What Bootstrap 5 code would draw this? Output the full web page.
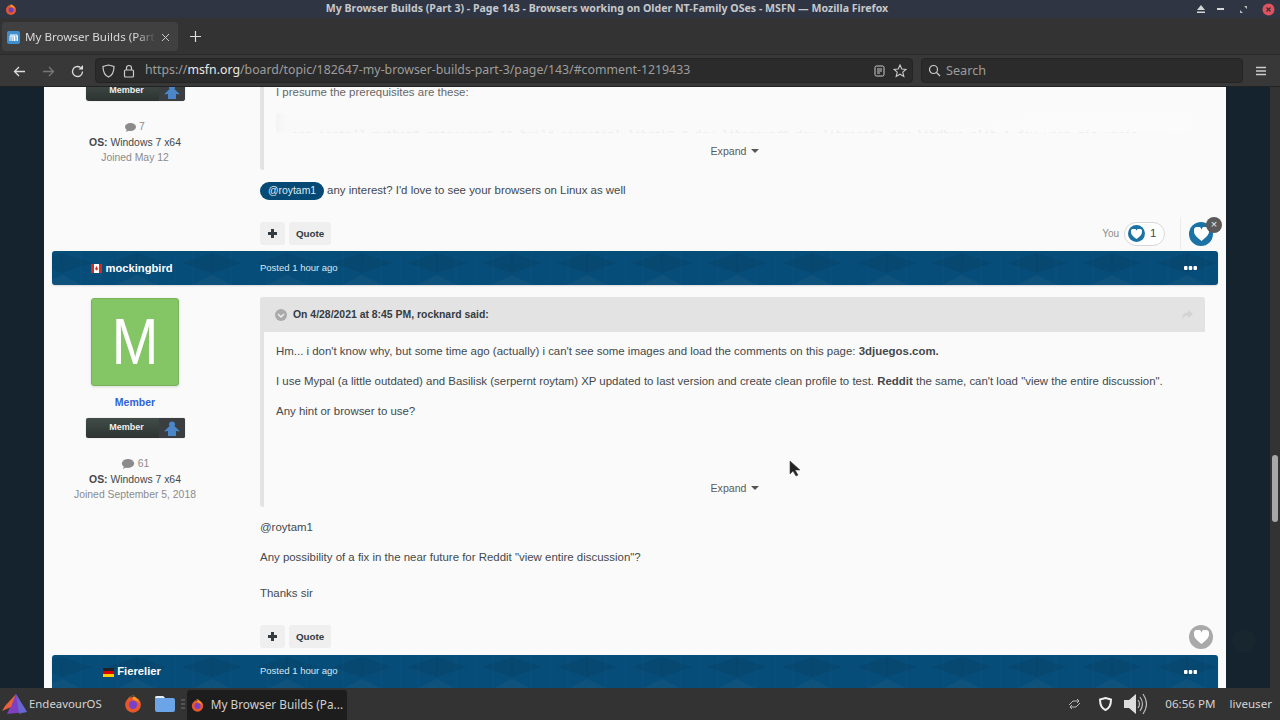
<!DOCTYPE html>
<html lang="en"><head><meta charset="utf-8"><title>My Browser Builds</title>
<link href="https://cdn.jsdelivr.net/npm/bootstrap@5.3.0/dist/css/bootstrap.min.css" rel="stylesheet">
<style>
html,body{height:720px;overflow:hidden;margin:0;background:#333}
body{font-family:"Liberation Sans",Arial,sans-serif;font-size:11.44px;color:#43484c;position:relative}
.uifont{font-family:"Noto Sans",sans-serif}
.titlebar{height:18px;background:#2f3542;color:#c5c8cc;font-size:10.6px;font-weight:700;padding:0 5px}
.titlebar .sidel{width:94px}
.titlebar .sider{width:160px;gap:14px}
.titlebar .sider svg:first-child{margin-right:-3px}
.tabbar{height:36px;background:#333;padding:4px 2px 3px}
.ftab{width:176px;height:29px;background:#404040;border-radius:4px;color:#d8d8d8;font-size:11.6px;padding:1px 8px 0 5px;overflow:hidden;white-space:nowrap}
.ftab .ttl{width:131px;margin-left:5px;overflow:hidden;-webkit-mask-image:linear-gradient(90deg,#000 85%,transparent)}
.newtab{margin-left:12px;width:16px}
.toolbar{height:33px;background:#383838;border-top:1px solid #2a2a2a;border-bottom:1px solid #222;padding:0 13px;color:#ccc}
.navic{width:29px}
.navic.lastnav{width:24px}
.urlbox,.searchbox{height:25px;background:#2b2b2b;border:1px solid #242424;border-radius:4px;color:#9d9d9d}
.urlbox{width:818px;padding:0 5px 0 6px;font-size:12.32px}
.urlbox .addr{margin-left:10px}
.searchbox{width:322px;margin-left:8px;padding:0 6px;font-size:12.7px}
.searchbox span{margin-left:5px}
.urlbox b{color:#e8e8e8;font-weight:400}
.viewport{height:601px;background:#14232d;overflow:hidden;padding-left:44px;position:relative}
.sheet{width:1182px;height:601px;background:#fafafa;padding:0 8px;flex:none}
.scrolltrack{width:10px;background:#333;margin-left:44px;height:601px;position:relative;flex:none}
.scrollthumb{width:6px;height:67px;background:#a8a8a8;border-radius:3px;margin:368px auto 0 2px}
.postone{height:164px}
.posttwo{height:370px}
.authcol{width:166px;flex:none;text-align:center;font-size:10.4px;color:#43484c}
.maincol{width:945px;margin-left:42px;flex:none}
.rankimg{width:99px;height:20px;margin:0 auto;border-radius:2px;background:linear-gradient(#414c48,#2d3431);color:#eee;font-weight:700;font-size:9px;overflow:hidden;box-shadow:0 0 1px #0006}
.rankimg.cut{margin-top:-6px;border-radius:3px}
.rankimg .lbl{width:73px;text-align:center;padding-left:9px}
.rankimg .ico{width:26px;background:#3a3e40;height:100%}
.postcount{color:#8b8b8b;line-height:15px;margin-top:18px}
.osline{line-height:15px;margin-top:1px}
.joined{color:#8b8b8b;line-height:15px}
.quotefirst{height:83px;border-left:4px solid #e3e3e3;padding-left:12px;border-radius:0 0 0 3px;color:#666}
.quotefirst .firstline{line-height:11px}
.fadecode{height:20px;margin:15px 14px 0 0;background:linear-gradient(90deg,#f4f4f4,#f9f9f9 1%,#fbfbfb);border-radius:3px;overflow:hidden;color:#ececec;font-family:"Liberation Mono",monospace;font-size:11.2px;padding:14px 0 0 16px;white-space:nowrap}
.expandlnk{font-size:10.6px;color:#5a5a5a;text-align:center;line-height:15px;margin-left:-11px}
.quotefirst .expandlnk{margin-top:11px}
.qbody .expandlnk{margin-top:62px}
.caretdn{display:inline-block;border:4px solid transparent;border-top-color:#555;border-bottom:0;margin-left:5px;vertical-align:2px}
.mention{background:#054a75;color:#dfe9f0;border-radius:12px;padding:0 8px;height:18px;line-height:18px;display:inline-block;margin-right:3px;font-size:10.4px}
.mentionrow{margin-top:12px;height:18px}
.mini{height:23px;background:#efefef;border-radius:3px;font-size:9.8px;font-weight:700;color:#353c41;padding:0 7px;margin-right:4px;line-height:23px;display:inline-block}
.mini.plus{width:25px;padding:0;display:inline-flex;align-items:center;justify-content:center}
.postbar{height:33px;margin-top:17px}
.postbar.second{margin-top:19px}
.yoult{color:#8b8b8b;font-size:10px;margin-right:5px}
.likepill{width:41px;height:24px;border:1px solid #d8d8d8;border-radius:12px;padding-left:3px;background:#fff}
.likenum{margin-left:5px}
.reactdot{width:24px;height:24px;border-radius:50%;background:#1a72a5;position:relative;margin-right:-8px}
.reactdot.off{background:#a9a9a9}
.smalldot{width:17px;height:17px;border-radius:50%;background:#1a72a5;flex:none}
.closedot{position:absolute;right:-9px;top:-5px;width:16px;height:16px;border-radius:50%;background:#5a5a5a;color:#eee;font-size:11px;line-height:15px;text-align:center}
.vsep{width:1px;height:33px;background:#ececec;margin:0 8px 0 15px}
.phead{height:34px;background:#074d79;border-radius:3px;color:#fff;position:relative;overflow:hidden;box-shadow:0 1px 2px #0002}
.phead.endcut{height:33px;border-radius:3px 3px 0 0}
.phead svg.pat{position:absolute;left:0;top:0}
.phead>div{position:relative}
.pname{width:166px;text-align:center;font-weight:700;font-size:11.2px;padding-right:6px}
.pdate{margin-left:42px;font-size:9.5px;color:#dbe6ed}
.dots{margin-left:auto;margin-right:21px}
.qhead{height:35px;background:#e3e3e3;border-radius:3px 3px 0 0;padding:0 12px 0 15px;font-size:10.43px;font-weight:700;color:#353c41}
.qhead .qtitle{margin-left:6px}
.qbody{height:175px;border-left:4px solid #e3e3e3;padding:12px 0 0 12px;border-radius:0 0 0 3px}
.qbody p{margin:0 0 15px;line-height:15px}
.bodyp{line-height:15px;margin:15px 0 0}
.bodyp.firstafter{margin-top:13px}
.bodyp.thanks{margin-top:21px}
.avatar{width:88px;height:88px;background:#84c566;border:1px solid #77b35b;border-radius:3px;color:#fff;font-size:65px;line-height:86px;margin:13px auto 0 39px;box-shadow:0 1px 3px #0002}
.avatar span{display:inline-block;transform:scaleX(.86)}
.grouplbl{color:#2f62d6;font-weight:700;font-size:10.5px;line-height:15px;margin:9px 0 8px}
.taskbar{height:32px;background:#333;color:#d4d4d4;font-size:11.6px;padding:0 8px 0 2px}
.taskbar .endos{margin-left:2px;font-size:11.4px}
.activetask{width:160px;height:30px;margin-top:2px;background:#1d1d1d;border-radius:3px 3px 0 0;padding-left:4px;margin-left:2px;color:#d0d0d0;white-space:nowrap}
.activetask span{margin-left:7px;font-size:11.8px}
.cursorptr{position:absolute;left:789px;top:373px}
.topghost{position:absolute;left:1232px;top:542px;width:24px;height:24px;border-radius:50%;background:#17262f}
.fficon{margin-left:22px}.foldericon{margin-left:13px}.gripicon{margin-left:6px}
.trayshield{margin-left:18px}.trayspk{margin-left:12px}.traytime{margin-left:18px}.trayuser{margin-left:14px}
</style></head><body>

<div class="titlebar d-flex align-items-center uifont">
 <div class="sidel d-flex"><svg width="12" height="13" viewBox="0 0 24 24"><circle cx="12" cy="13" r="10" fill="#e8572c"/><path d="M5 6Q9 0 13 2 8 5 13 7 19 8 22 13 18 4 12 1 7 1 5 6Z" fill="#fa9a2c"/><circle cx="12" cy="13" r="5" fill="#6b3fc4"/></svg></div>
 <div class="flex-grow-1 text-center">My Browser Builds (Part 3) - Page 143 - Browsers working on Older NT-Family OSes - MSFN — Mozilla Firefox</div>
 <div class="sider d-flex justify-content-end align-items-center">
  <svg width="10" height="8" viewBox="0 0 10 8"><path d="M5 0 9 5H1Z M1 6.500H9V8H1Z" fill="#d5d5d5"/></svg>
  <svg width="8" height="8" viewBox="0 0 8 8"><rect y="3" width="7" height="2" fill="#d5d5d5"/></svg>
  <svg width="9" height="9" viewBox="0 0 9 9"><path d="M5 1H8V4ZM4 8H1V5Z" fill="#bbb"/></svg>
  <svg width="13" height="13" viewBox="0 0 13 13"><circle cx="6.500" cy="6.500" r="6" fill="#e0525f"/><path d="M4.500 4.500l4 4m0-4l-4 4" stroke="#333" stroke-width="1.300"/></svg>
 </div>
</div>

<div class="tabbar d-flex align-items-center uifont">
 <div class="ftab d-flex align-items-center">
  <svg class="flex-none" width="13" height="13" viewBox="0 0 13 13"><rect width="13" height="13" rx="2" fill="#3f8fd0"/><path d="M3 10V5h2v5M6 10V5h1.500v5M9 10V5h1.500v5M3 4h7.500" stroke="#fff" stroke-width="1" fill="none"/></svg>
  <span class="ttl">My Browser Builds (Part 3) - Page</span>
  <svg class="ms-auto" width="9" height="9" viewBox="0 0 9 9"><path d="M1 1l7 7m0-7L1 8" stroke="#ccc" stroke-width="1"/></svg>
 </div>
 <div class="newtab d-flex"><svg width="11" height="11" viewBox="0 0 11 11"><path d="M5.500 0v11M0 5.500h11" stroke="#ddd" stroke-width="1.200"/></svg></div>
</div>

<div class="toolbar d-flex align-items-center uifont">
 <div class="navic"><svg width="13" height="13" viewBox="0 0 13 13"><path d="M12 6.500H1.500M6 2 1.500 6.500 6 11" stroke="#ddd" stroke-width="1.300" fill="none"/></svg></div>
 <div class="navic"><svg width="13" height="13" viewBox="0 0 13 13"><path d="M1 6.500h10.500M7 2l4.500 4.500L7 11" stroke="#777" stroke-width="1.300" fill="none"/></svg></div>
 <div class="navic lastnav"><svg width="13" height="13" viewBox="0 0 13 13"><path d="M11.500 6.500A5 5 0 1 1 9.500 2.500" stroke="#ddd" stroke-width="1.300" fill="none"/><path d="M12 0v4.500H7.500Z" fill="#ddd"/></svg></div>
 <div class="urlbox d-flex align-items-center">
  <svg width="13" height="14" viewBox="0 0 13 14"><path d="M6.500 1 12 2.500C12 8 10 11.500 6.500 13 3 11.500 1 8 1 2.500Z" stroke="#ccc" stroke-width="1.200" fill="none"/></svg>
  <svg class="ms-2" width="12" height="14" viewBox="0 0 12 14"><rect x="1.500" y="6" width="9" height="7" rx="1" stroke="#ccc" stroke-width="1.200" fill="none"/><path d="M3.500 6V4a2.500 2.500 0 0 1 5 0v2" stroke="#ccc" stroke-width="1.200" fill="none"/></svg>
  <span class="addr">https://<b>msfn.org</b>/board/topic/182647-my-browser-builds-part-3/page/143/#comment-1219433</span>
  <svg class="ms-auto" width="11" height="12" viewBox="0 0 11 12"><rect x="1" y="1" width="9" height="10" rx="1.500" stroke="#ccc" fill="none"/><path d="M3 4h5M3 6h5M3 8h3" stroke="#ccc"/></svg>
  <svg class="ms-2" width="14" height="14" viewBox="0 0 14 14"><path d="M7 1l1.800 4 4.200.400-3.200 2.800 1 4.200L7 10.200 3.200 12.400l1-4.200L1 5.400l4.200-.400Z" stroke="#ccc" stroke-width="1.100" fill="none"/></svg>
 </div>
 <div class="searchbox d-flex align-items-center">
  <svg width="13" height="13" viewBox="0 0 13 13"><circle cx="5.500" cy="5.500" r="4" stroke="#ccc" stroke-width="1.200" fill="none"/><path d="M8.500 8.500 12 12" stroke="#ccc" stroke-width="1.300"/></svg>
  <span>Search</span>
 </div>
 <svg class="ms-auto" width="12" height="10" viewBox="0 0 12 10"><path d="M1 1.500h10M1 5h10M1 8.500h10" stroke="#ccc" stroke-width="1.300"/></svg>
</div>

<div class="viewport d-flex">
 <div class="sheet">
  <div class="postone d-flex">
   <div class="authcol">
    <div class="rankimg cut d-flex align-items-center"><div class="lbl">Member</div><div class="ico d-flex align-items-center justify-content-center"><svg width="16" height="15" viewBox="0 0 16 15"><circle cx="8" cy="3.500" r="3" fill="#4b86c8"/><path d="M5 5.500h6L16 10.500 12 10v5H4v-5l-4 .5Z" fill="#4b86c8"/></svg></div></div>
    <div class="postcount"><svg width="11" height="9" viewBox="0 0 11 9"><ellipse cx="5.500" cy="4" rx="5.500" ry="4" fill="#8b8b8b"/><path d="M2 6 1 9 5 7Z" fill="#8b8b8b"/></svg> 7</div>
    <div class="osline"><b>OS:</b> Windows 7 x64</div>
    <div class="joined">Joined May 12</div>
   </div>
   <div class="maincol">
    <div class="quotefirst">
     <div class="firstline">I presume the prerequisites are these:</div>
     <div class="fadecode">apt install python2 gstreamer0.10 build-essential libgtk2.0-dev libasound2-dev libgconf2-dev libdbus-glib-1-dev yasm zip unzip</div>
     <div class="expandlnk">Expand<span class="caretdn"></span></div>
    </div>
    <div class="mentionrow d-flex align-items-center"><span class="mention">@roytam1</span><span>any interest? I'd love to see your browsers on Linux as well</span></div>
    <div class="postbar d-flex align-items-center">
     <span class="mini plus"><svg width="11" height="11" viewBox="0 0 11 11"><path d="M5.500 1v9M1 5.500h9" stroke="#353c41" stroke-width="3"/></svg></span><span class="mini">Quote</span>
     <span class="ms-auto yoult">You</span>
     <div class="likepill d-flex align-items-center"><span class="smalldot d-flex align-items-center justify-content-center"><svg width="11" height="10" viewBox="0 0 12 11"><path d="M6 11C2 8 0 6 0 3.500A3 3 0 0 1 6 2a3 3 0 0 1 6 1.500C12 6 10 8 6 11Z" fill="#fff"/></svg></span><span class="likenum">1</span></div>
     <div class="vsep"></div>
     <div class="reactdot d-flex align-items-center justify-content-center"><svg width="15" height="14" viewBox="0 0 12 11"><path d="M6 11C2 8 0 6 0 3.500A3 3 0 0 1 6 2a3 3 0 0 1 6 1.500C12 6 10 8 6 11Z" fill="#fff"/></svg><span class="closedot">×</span></div>
    </div>
   </div>
  </div>

  <div class="phead d-flex align-items-center">
   <svg class="pat" width="1166" height="34"><defs><pattern id="tri" width="75" height="34" patternUnits="userSpaceOnUse" patternTransform="translate(-27 0)"><path d="M7 12 37 2 67 12 37 22Z" fill="#00000012"/><path d="M37 2V22" stroke="#0000000c"/><path d="M17 34 37 24 57 34Z" fill="#ffffff08"/><path d="M0 0V34M18 0V34M56 0V34" stroke="#ffffff05"/></pattern></defs><rect width="1166" height="34" fill="url(#tri)"/></svg>
   <div class="pname"><svg width="11" height="9" viewBox="0 0 11 9"><rect width="11" height="9" fill="#fff"/><path d="M0 0h3v9H0ZM8 0h3v9H8Z" fill="#d52b1e"/><path d="M5.500 2 7 5 5.500 6.500 4 5Z" fill="#d52b1e"/></svg> mockingbird</div>
   <div class="pdate">Posted 1 hour ago</div>
   <div class="dots"><svg width="13" height="4" viewBox="0 0 13 4"><rect width="3.500" height="4" rx="1" fill="#fff"/><rect x="4.750" width="3.500" height="4" rx="1" fill="#fff"/><rect x="9.500" width="3.500" height="4" rx="1" fill="#fff"/></svg></div>
  </div>

  <div class="posttwo d-flex">
   <div class="authcol">
    <div class="avatar"><span>M</span></div>
    <div class="grouplbl">Member</div>
    <div class="rankimg d-flex align-items-center"><div class="lbl">Member</div><div class="ico d-flex align-items-center justify-content-center"><svg width="16" height="15" viewBox="0 0 16 15"><circle cx="8" cy="3.500" r="3" fill="#4b86c8"/><path d="M5 5.500h6L16 10.500 12 10v5H4v-5l-4 .5Z" fill="#4b86c8"/></svg></div></div>
    <div class="postcount"><svg width="14" height="10" viewBox="0 0 11 9"><ellipse cx="5.500" cy="4" rx="5.500" ry="4" fill="#8b8b8b"/><path d="M2 6 1 9 5 7Z" fill="#8b8b8b"/></svg> 61</div>
    <div class="osline"><b>OS:</b> Windows 7 x64</div>
    <div class="joined">Joined September 5, 2018</div>
   </div>
   <div class="maincol pt-2 mt-1">
    <div class="qhead d-flex align-items-center">
     <svg width="12" height="12" viewBox="0 0 12 12"><circle cx="6" cy="6" r="6" fill="#aaa"/><path d="M3 5l3 3 3-3" stroke="#eee" stroke-width="1.500" fill="none"/></svg>
     <span class="qtitle">On 4/28/2021 at 8:45 PM, rocknard said:</span>
     <svg class="ms-auto" width="12" height="10" viewBox="0 0 12 10"><path d="M7 0l5 4-5 4V5.500C4 5.500 2 7 1 10 1 5 3 2.500 7 2.500Z" fill="#d3d3d3"/></svg>
    </div>
    <div class="qbody">
     <p>Hm... i don't know why, but some time ago (actually) i can't see some images and load the comments on this page: <b>3djuegos.com.</b></p>
     <p>I use Mypal (a little outdated) and Basilisk (serpernt roytam) XP updated to last version and create clean profile to test. <b>Reddit</b> the same, can't load "view the entire discussion".</p>
     <p>Any hint or browser to use?</p>
     <div class="expandlnk">Expand<span class="caretdn"></span></div>
    </div>
    <p class="bodyp firstafter">@roytam1</p>
    <p class="bodyp">Any possibility of a fix in the near future for Reddit "view entire discussion"?</p>
    <p class="bodyp thanks">Thanks sir</p>
    <div class="postbar second d-flex align-items-center">
     <span class="mini plus"><svg width="11" height="11" viewBox="0 0 11 11"><path d="M5.500 1v9M1 5.500h9" stroke="#353c41" stroke-width="3"/></svg></span><span class="mini">Quote</span>
     <div class="reactdot off ms-auto d-flex align-items-center justify-content-center"><svg width="15" height="14" viewBox="0 0 12 11"><path d="M6 11C2 8 0 6 0 3.500A3 3 0 0 1 6 2a3 3 0 0 1 6 1.500C12 6 10 8 6 11Z" fill="#fff"/></svg></div>
    </div>
   </div>
  </div>

  <div class="phead endcut d-flex align-items-center">
   <svg class="pat" width="1166" height="34"><rect width="1166" height="34" fill="url(#tri)"/></svg>
   <div class="pname"><svg width="11" height="9" viewBox="0 0 11 9"><rect width="11" height="3" fill="#222"/><rect y="3" width="11" height="3" fill="#d00"/><rect y="6" width="11" height="3" fill="#fc0"/></svg> Fierelier</div>
   <div class="pdate">Posted 1 hour ago</div>
   <div class="dots"><svg width="13" height="4" viewBox="0 0 13 4"><rect width="3.500" height="4" rx="1" fill="#fff"/><rect x="4.750" width="3.500" height="4" rx="1" fill="#fff"/><rect x="9.500" width="3.500" height="4" rx="1" fill="#fff"/></svg></div>
  </div>
 </div>
 <div class="scrolltrack"><div class="scrollthumb"></div></div>
 <svg class="cursorptr" width="12" height="17" viewBox="0 0 12 17"><path d="M1 1v13l3-3 3 5 2-1-3-5h5Z" fill="#222" stroke="#444" stroke-width=".6"/></svg>
 <div class="topghost"></div>
</div>

<div class="taskbar d-flex align-items-center uifont">
 <svg width="25" height="22" viewBox="0 0 25 22"><path d="M14 1 25 19 5 21Z" fill="#7f3fbf"/><path d="M14 1 3 13 0 18 9 14Z" fill="#e8613c"/><path d="M14 1 25 19 17 21Z" fill="#5a7ee0" opacity=".6"/></svg>
 <span class="endos">EndeavourOS</span>
 <svg class="fficon" width="18" height="18" viewBox="0 0 24 24"><circle cx="12" cy="13" r="10.500" fill="#e8572c"/><path d="M5 6Q9 0 14 1 9 5 14 7 20 8 22 13 19 4 12 1 7 1 5 6Z" fill="#fa9a2c"/><circle cx="12" cy="13" r="5.500" fill="#7542c9"/></svg>
 <svg class="foldericon" width="20" height="16" viewBox="0 0 20 16"><path d="M0 2q0-2 2-2h6l2 2h8q2 0 2 2v10q0 2-2 2H2q-2 0-2-2Z" fill="#6ba5e7"/><path d="M0 2q0-2 2-2h6l2 2Z" fill="#e8eef5"/></svg>
 <svg class="gripicon" width="4" height="10" viewBox="0 0 4 10"><path d="M0 1h4M0 5h4M0 9h4" stroke="#777"/></svg>
 <div class="activetask d-flex align-items-center">
  <svg width="13" height="13" viewBox="0 0 24 24"><circle cx="12" cy="13" r="10.500" fill="#e8572c"/><path d="M5 6Q9 0 14 1 9 5 14 7 20 8 22 13 19 4 12 1 7 1 5 6Z" fill="#fa9a2c"/><circle cx="12" cy="13" r="5.500" fill="#7542c9"/></svg>
  <span>My Browser Builds (Pa...</span>
 </div>
 <svg class="ms-auto" width="13" height="12" viewBox="0 0 13 12"><path d="M1 7 5 3h6M9 1l2 2-2 2M12 5 8 9H2M4 7 2 9l2 2" stroke="#bbb" fill="none"/></svg>
 <svg class="trayshield" width="13" height="14" viewBox="0 0 13 14"><path d="M6.500 1 12 2.500C12 8 10 11.500 6.500 13 3 11.500 1 8 1 2.500Z" stroke="#eee" stroke-width="2" fill="none"/></svg>
 <svg class="trayspk" width="23" height="24" viewBox="0 0 23 24"><path d="M0 8h5l7-6v20l-7-6H0Z" fill="#ddd"/><path d="M14 8q3 4 0 8M16 5q5 7 0 14M19 2q7 10 0 20" stroke="#bbb" stroke-width="1.200" fill="none"/></svg>
 <span class="traytime">06:56 PM</span>
 <span class="trayuser">liveuser</span>
</div>
</body></html>
